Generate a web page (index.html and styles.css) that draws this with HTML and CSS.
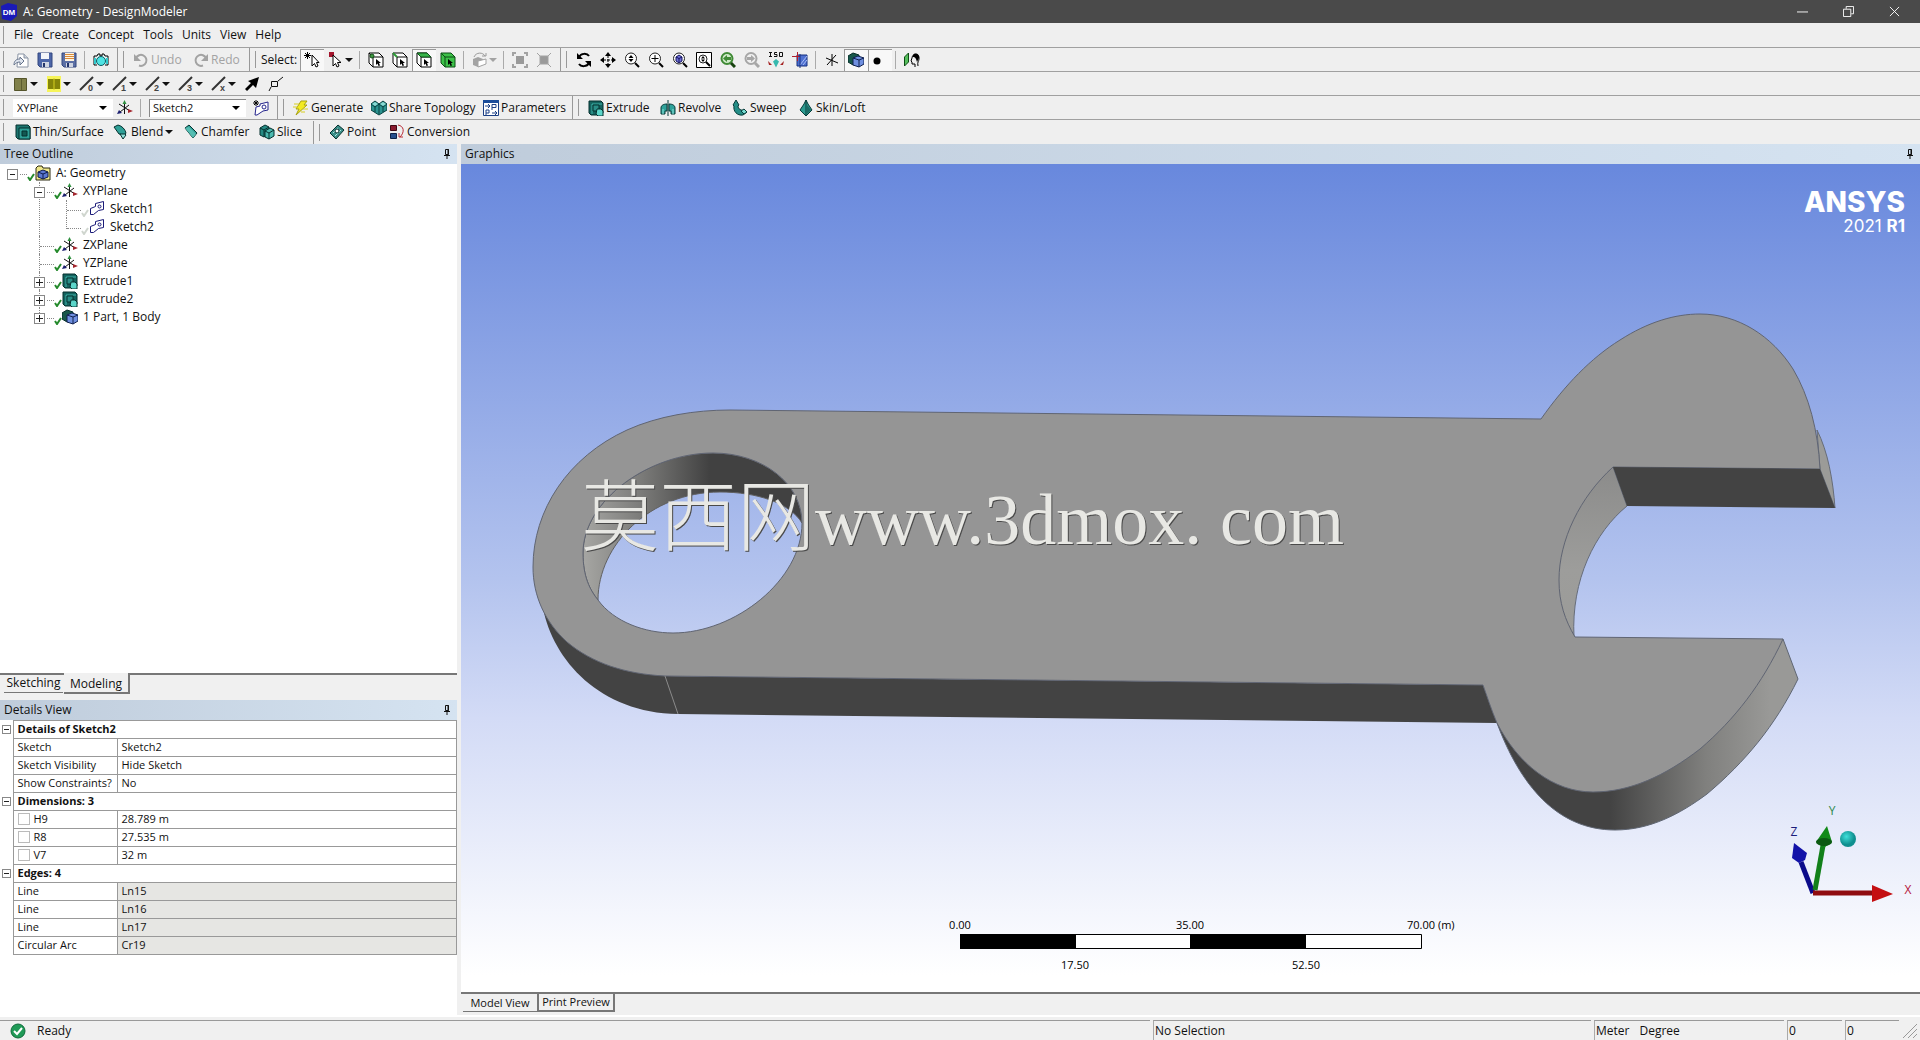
FILE: index.html
```html
<!DOCTYPE html>
<html lang="en">
<head>
<meta charset="utf-8">
<title>A: Geometry - DesignModeler</title>
<link rel="stylesheet" href="styles.css">
</head>
<body>
<svg class="defs" aria-hidden="true">
  <symbol id="i-new" viewBox="0 0 16 16"><path d="M5 2h6l4 4v9H4z" fill="#fff" stroke="#8a94a4"/><path d="M11 2v4h4" fill="#cdd3dc" stroke="#8a94a4"/><path d="M1 13c0-4 2-6 6-6V5l4 4-4 4v-3c-3 0-4 1-6 3z" fill="#dfe5ee" stroke="#66748c"/></symbol>
  <symbol id="i-save" viewBox="0 0 16 16"><path d="M1 1h14v14H3l-2-2z" fill="#4d66a8" stroke="#33477f"/><path d="M4 1h8v6H4z" fill="#f3f5f9"/><path d="M5 10h7v5H5z" fill="#cfd5e2"/><path d="M6 11h2v4H6z" fill="#24356b"/></symbol>
  <symbol id="i-saveas" viewBox="0 0 16 16"><path d="M1 1h14v14H3l-2-2z" fill="#5c70a5" stroke="#33477f"/><path d="M4 1h9v8H4z" fill="#fff4df"/><path d="M4 2.500h9M4 4.500h9M4 6.500h9" stroke="#d98a3a"/><path d="M5 11h7v4H5z" fill="#cfd5e2"/><path d="M6 11h2v4H6z" fill="#24356b"/></symbol>
  <symbol id="i-camera" viewBox="0 0 16 16"><path d="M1 4h3l1-2h2v2h2V2h2l1 2h3v9h-3M4 13H1V4" fill="#e8f6f6" stroke="#000"/><circle cx="8" cy="9" r="4.500" fill="#4fe3e3" stroke="#0c5a60"/><path d="M2 6v6M14 6v6" stroke="#34c8cc" stroke-width="2"/></symbol>
  <symbol id="i-undo" viewBox="0 0 16 16"><path d="M3 6a5.500 5.500 0 1 1 3 7.500" fill="none" stroke="#a3a3a3" stroke-width="2"/><path d="M1 2v7h7z" fill="#a3a3a3"/></symbol>
  <symbol id="i-redo" viewBox="0 0 16 16"><path d="M13 6a5.500 5.500 0 1 0-3 7.500" fill="none" stroke="#a3a3a3" stroke-width="2"/><path d="M15 2v7H8z" fill="#a3a3a3"/></symbol>
  <symbol id="i-newsel" viewBox="0 0 16 16"><path d="M3.500 0v7M0 3.500h7M1 1l5 5M6 1L1 6" stroke="#000"/><path d="M8 3v11l2.500-2.500L12 15l2-1-1.500-3.500H15z" fill="#fff" stroke="#000"/></symbol>
  <symbol id="i-selmode" viewBox="0 0 16 16"><path d="M1 0h5v5H1z" fill="#a3142c"/><path d="M5 3v11l2.500-2.500L9 15l2-1-1.500-3.500H13z" fill="#fff" stroke="#000"/></symbol>
  <symbol id="i-cube" viewBox="0 0 16 16"><path d="M1 1h10l4 4v10H5l-4-4z" fill="#fff" stroke="#000"/><path d="M1 1l4 4h10M5 5v10" fill="none" stroke="#000"/><path d="M8 7v6l1.500-1.500 1 2.500 1.500-.5-1-2.500h2z"/></symbol>
  <symbol id="i-vert" viewBox="0 0 16 16"><use href="#i-cube"/><circle cx="4" cy="4" r="2" fill="#3c9a3f" stroke="#124d17"/></symbol>
  <symbol id="i-edge" viewBox="0 0 16 16"><use href="#i-cube"/><path d="M1 1l4 4" stroke="#2c9a35" stroke-width="2"/></symbol>
  <symbol id="i-face" viewBox="0 0 16 16"><use href="#i-cube"/><path d="M1 1h10l4 4H5z" fill="#38b44a" stroke="#0c5418"/></symbol>
  <symbol id="i-body" viewBox="0 0 16 16"><path d="M1 1h10l4 4v10H5l-4-4z" fill="#3cc148" stroke="#0b4d14"/><path d="M1 1l4 4h10M5 5v10" fill="none" stroke="#0b4d14"/><path d="M8 7v6l1.500-1.500 1 2.500 1.500-.5-1-2.500h2z"/></symbol>
  <symbol id="i-extend" viewBox="0 0 16 16"><path d="M1 7l5-2 5 2v6l-5 2-5-2z" fill="#a3a3a3"/><path d="M6 9l8-2v5l-8 3z" fill="#fff" stroke="#a3a3a3"/><path d="M2 5c2-5 9-5 11-1M10 4h4V1" fill="none" stroke="#9a9a9a"/></symbol>
  <symbol id="i-grow" viewBox="0 0 16 16"><path d="M4 4h8v8H4z" fill="#9a9a9a"/><path d="M1 4V1h3M12 1h3v3M15 12v3h-3M4 15H1v-3" fill="none" stroke="#a3a3a3" stroke-width="2"/></symbol>
  <symbol id="i-shrink" viewBox="0 0 16 16"><path d="M4 4h8v8H4zM1 1l4 4M15 1l-4 4M1 15l4-4M15 15l-4-4" fill="#9a9a9a" stroke="#a3a3a3"/></symbol>
  <symbol id="i-rotate" viewBox="0 0 16 16"><path d="M3 5c2-4 8-4 10-1M13 11c-2 4-8 4-10 1" fill="none" stroke="#000" stroke-width="2"/><path d="M1 1v6h6zM15 15V9H9z"/></symbol>
  <symbol id="i-pan" viewBox="0 0 16 16"><path d="M8 3v10M3 8h10" stroke="#000" stroke-dasharray="3 1"/><path d="M8 0l3 4H5zM8 16l3-4H5zM0 8l4-3v6zM16 8l-4-3v6z"/></symbol>
  <symbol id="i-lens" viewBox="0 0 16 16"><circle cx="7" cy="6.500" r="5.500" fill="#fff" stroke="#222"/><path d="M11 11l4 4" stroke="#000" stroke-width="2"/></symbol>
  <symbol id="i-zoom" viewBox="0 0 16 16"><use href="#i-lens"/><path d="M7 3l2.500 3h-5zM7 10l2.500-3h-5z"/></symbol>
  <symbol id="i-zoomin" viewBox="0 0 16 16"><use href="#i-lens"/><path d="M7 3v7M3.500 6.500h7" stroke="#000"/></symbol>
  <symbol id="i-zoomfit" viewBox="0 0 16 16"><use href="#i-lens"/><path d="M4 5l3-2 3 2v4l-3 2-3-2z" fill="#6f6fd8" stroke="#14145e"/><path d="M4 5l3 1.500L10 5M7 6.500V11" fill="none" stroke="#14145e"/></symbol>
  <symbol id="i-zoombox" viewBox="0 0 16 16"><path d="M.5.5h15v15H.5z" fill="#fff" stroke="#000"/><circle cx="7" cy="7" r="4" fill="none" stroke="#222"/><path d="M10 10l4 4" stroke="#000" stroke-width="2"/><path d="M7 4l2 2.500H5zM7 10l2-2.500H5z"/></symbol>
  <symbol id="i-prev" viewBox="0 0 16 16"><circle cx="7" cy="6.500" r="5.500" fill="#cfeac8" stroke="#3f8a35" stroke-width="2"/><path d="M11 11l4 4" stroke="#17420f" stroke-width="3"/><path d="M3 6.500l4-3.500v2h4v3H7v2z" fill="#3f8a35"/></symbol>
  <symbol id="i-next" viewBox="0 0 16 16"><circle cx="7" cy="6.500" r="5.500" fill="#efefef" stroke="#a6a6a6" stroke-width="2"/><path d="M11 11l4 4" stroke="#a6a6a6" stroke-width="3"/><path d="M11 6.500L7 3v2H3v3h4v2z" fill="#a6a6a6"/></symbol>
  <symbol id="i-iso" viewBox="0 0 16 16"><path d="M1 .5h3M2.500 0v5M1 4.500h3M9 .5H6.500v2H9v2H6M11.500.5h3v4h-3z" fill="none" stroke="#111"/><path d="M8 7l3 2.500-3 6-3-6z" fill="#37b9ae"/><path d="M0 9l4 4H1z" fill="#a52222"/><path d="M16 9l-4 4h3z" fill="#a52222"/></symbol>
  <symbol id="i-look" viewBox="0 0 16 16"><path d="M5 3h10v11H5z" fill="#4d6fd0" stroke="#17307e"/><path d="M8 13l7-9M11 13l4-5" stroke="#a9bdf5"/><path d="M5.500 0v9M0 4.500h8" stroke="#b01f2d"/><path d="M8 2v14" stroke="#17307e"/></symbol>
  <symbol id="i-axes" viewBox="0 0 16 16"><path d="M8 2v12M2 6l12 5M3 13L12 3" stroke="#000"/></symbol>
  <symbol id="i-model" viewBox="0 0 16 16"><path d="M0 4l5-3 6 2v7l-6 3-5-3z" fill="#17574a" stroke="#062d28"/><path d="M5 6l5-2 6 2v6l-5 3-6-2z" fill="#6f8fe0" stroke="#10204f"/><path d="M5 6l6 2 5-2M11 8v7" fill="none" stroke="#10204f"/></symbol>
  <symbol id="i-dot" viewBox="0 0 16 16"><circle cx="5" cy="9" r="3.500"/></symbol>
  <symbol id="i-lookat" viewBox="0 0 16 16"><path d="M.5 5l4-4v9l-4 4z" fill="#55bf5c" stroke="#0c4d14"/><path d="M8 6c0-5 8-5 7 1 0 2-2 3-1 7M8 6l-1 3 1 1v2h3v3" fill="none" stroke="#000"/><path d="M9 3c2-3 7-1 6 3l-2 4c-1-4-2-5-4-5z"/></symbol>
  <symbol id="i-facecol" viewBox="0 0 16 16"><path d="M1.500 2.500h12v12h-12z" fill="#80804a" stroke="#55552b"/><path d="M8.500 2v12" stroke="#5c5c30"/></symbol>
  <symbol id="i-edgecol" viewBox="0 0 16 16"><path d="M1 0h14v16H1z" fill="#f6f45a"/><path d="M2 3h12v10H2z" fill="#85850a"/><path d="M8 2v12" stroke="#d6d020"/></symbol>
  <symbol id="i-pen" viewBox="0 0 16 16"><path d="M1 14L14 1" stroke="#333" stroke-width="2"/></symbol>
  <symbol id="i-arrowne" viewBox="0 0 16 16"><path d="M15 1l-3 11-3-3-6 6-2-2 6-6-3-2z"/></symbol>
  <symbol id="i-node" viewBox="0 0 16 16"><path d="M3.500 5.500h6v5h-6zM10 5l5-4M3 11l-2 4" fill="none" stroke="#111"/></symbol>
  <symbol id="i-plane" viewBox="0 0 16 16"><path d="M7.500 2v12M2 4l11 7M3 12l9-7" stroke="#111"/><path d="M7.500 0l2 4h-4z" fill="#2f8f3e"/><path d="M16 11l-5 2V9z" fill="#a3262e"/><path d="M0 14l5-1-3-3z" fill="#1b1f70"/></symbol>
  <symbol id="i-sketch" viewBox="0 0 16 16"><path d="M1.500 7.500l5-2v-3l8-2v8l-5 1-5 4h-3z" fill="#fff" stroke="#1a1a78"/><circle cx="10.500" cy="5.500" r="1.500" fill="none" stroke="#1a1a78"/></symbol>
  <symbol id="i-newsketch" viewBox="0 0 16 16"><path d="M3 7l4-1V4l8-2v8l-5 1-6 4H2z" fill="#fff" stroke="#24248c"/><circle cx="11" cy="7" r="2" fill="none" stroke="#24248c"/><path d="M3 0v6M0 3h6M1 1l4 4M5 1L1 5" stroke="#000"/></symbol>
  <symbol id="i-bolt" viewBox="0 0 16 16"><path d="M8 1h6l-3 4h3L3 15l3-6H3z" fill="#f3ea20" stroke="#a9a312"/><path d="M1 4h5M0 7h5M10 9h5M8 12h4" stroke="#d9cf20"/></symbol>
  <symbol id="i-share" viewBox="0 0 16 16"><path d="M0 4l4-3 4 3 4-3 4 3v6l-8 5-8-5z" fill="#2c9390" stroke="#07403f"/><path d="M0 4l4 3 4-3 4 3 4-3M4 7v5M12 7v5M8 4v10" fill="none" stroke="#07403f"/><path d="M4 2l3 2-3 2-3-2zM12 2l3 2-3 2-3-2z" fill="#8ad9d3"/></symbol>
  <symbol id="i-param" viewBox="0 0 16 16"><path d="M.5.5h15v15H.5z" fill="#fff" stroke="#1b3f85"/><path d="M0 0h16v3H0z" fill="#1b4c9a"/><path d="M2 6h4M5 4l2 2-2 2M9 10V4.500h4v3H9M3 15v-5h3v3H3M9 13h5M12 11l2 2-2 2" fill="none" stroke="#1b3f85"/></symbol>
  <symbol id="i-extrude" viewBox="0 0 16 16"><path d="M1 1h12l2 2v10l-2 2H3l-2-2z" fill="#14635f" stroke="#05302e"/><path d="M4 4h10M4 4v10" fill="none" stroke="#3fb5ab"/><path d="M5 5h6v6H5z" fill="#2a8f88" stroke="#05302e"/><path d="M9 9h4l2 2v5h-5l-2-2z" fill="#5cd6ca" stroke="#05302e"/></symbol>
  <symbol id="i-revolve" viewBox="0 0 16 16"><path d="M1 8c0-3 3-4 6-4v7H5v3H1zM9 4c3 0 6 1 6 4v6h-4v-3H9z" fill="#2fa29a" stroke="#063b39"/><path d="M8 0v16" stroke="#063b39"/><path d="M3 9v5M13 9v5" stroke="#8fe3db"/></symbol>
  <symbol id="i-sweep" viewBox="0 0 16 16"><path d="M1 5l3-5 3 5-1 1c0 3 3 5 7 4l2 2-4 3C5 16 1 11 2 6z" fill="#248d86" stroke="#063b39"/><path d="M12 9l3 3-3 2-3-3z" fill="#75dbd0" stroke="#063b39"/></symbol>
  <symbol id="i-skin" viewBox="0 0 16 16"><path d="M8 0l2 4 4 6-6 6-6-6 4-6z" fill="#2c9a90" stroke="#063b39"/><path d="M8 0v16" stroke="#063b39"/><path d="M9 5l4 5-4 4z" fill="#1b6c66"/></symbol>
  <symbol id="i-thin" viewBox="0 0 16 16"><path d="M1 1h12l2 2v12H3l-2-2z" fill="#1c756f" stroke="#05302e"/><path d="M4 4h11v11H4z" fill="#2fa097" stroke="#05302e"/><path d="M7 7h5v5H7z" fill="#135852" stroke="#05302e"/></symbol>
  <symbol id="i-blend" viewBox="0 0 16 16"><path d="M1 3l4-2c4 1 7 4 8 8l-3 4c-1-2-2-3-4-3z" fill="#2fa097" stroke="#05302e"/><path d="M7 10h5l1 1-3 4z" fill="#8fe3db" stroke="#05302e"/></symbol>
  <symbol id="i-chamfer" viewBox="0 0 16 16"><path d="M2 4l4-3 8 8-4 5z" fill="#2fa097" stroke="#05302e"/><path d="M2 4l4-1 7 7-3 4z" fill="#55bdb2"/></symbol>
  <symbol id="i-slice" viewBox="0 0 16 16"><path d="M1 4l5-3 4 2v7l-5 3-4-2z" fill="#268a83" stroke="#05302e"/><path d="M6 7l5-3 4 2v6l-5 3-4-2z" fill="#4cb9af" stroke="#05302e"/><path d="M1 4l4 2 5-3M6 7l4 2 5-3M10 9v6M5 6v7" fill="none" stroke="#05302e"/></symbol>
  <symbol id="i-point" viewBox="0 0 16 16"><path d="M1 9l8-8 6 5-8 9z" fill="#3a8f89" stroke="#05302e"/><path d="M4 9l5-5M6 12l6-6" stroke="#aee9e3"/><circle cx="8" cy="7" r="2" fill="#fff" stroke="#05302e"/></symbol>
  <symbol id="i-conv" viewBox="0 0 16 16"><path d="M1.500 1.500h6v5h-6z" fill="#8a1a2e" stroke="#3f0812"/><path d="M1.500 9.500h6v5h-6z" fill="#274f8c" stroke="#0e2347"/><path d="M9 1c6 1 7 7 2 12M10 9v4h4" fill="none" stroke="#b82a35"/></symbol>
  <symbol id="i-geom" viewBox="0 0 16 16"><path d="M1 3l2-2h4l1 2h7v12H1z" fill="#efe789" stroke="#2c2b12"/><path d="M3 7l5-2 5 2v5l-5 2-5-2z" fill="#5b77d1" stroke="#0f1c4d"/><path d="M3 7l5 2 5-2M8 9v5" fill="none" stroke="#0f1c4d"/></symbol>
  <symbol id="i-check" viewBox="0 0 8 8"><path d="M1 4l2 3 4-6" fill="none" stroke="currentColor" stroke-width="2"/></symbol>
  <symbol id="i-pin" viewBox="0 0 8 12"><path d="M2.500 1.500h3v5h-3zM1 7.500h6M4 8v3" fill="none" stroke="#111"/><path d="M5 1v6" stroke="#111"/></symbol>
</svg>

<div class="app">
  <header class="titlebar">
    <svg class="appicon" viewBox="0 0 18 18"><path d="M1 3l7-3 9 2v11l-6 5-9-2z" fill="#1a1ab8"/><text x="9" y="12" class="dm">DM</text></svg>
    <h1>A: Geometry - DesignModeler</h1>
    <div class="winbtns">
      <button aria-label="Minimize"><svg viewBox="0 0 12 12"><path d="M0 6.500h12" stroke="#fff"/></svg></button>
      <button aria-label="Restore"><svg viewBox="0 0 12 12"><path d="M.5 3.500h8v8h-8zM3.500 3V.5h8v8H9" fill="none" stroke="#fff"/></svg></button>
      <button aria-label="Close"><svg viewBox="0 0 12 12"><path d="M1 1l10 10M11 1L1 11" stroke="#fff"/></svg></button>
    </div>
  </header>

  <nav class="bar menu">
    <button>File</button><button>Create</button><button>Concept</button><button>Tools</button><button>Units</button><button>View</button><button>Help</button>
  </nav>

  <div class="bar">
    <button class="b" aria-label="New"><svg><use href="#i-new"/></svg></button>
    <button class="b" aria-label="Save"><svg><use href="#i-save"/></svg></button>
    <button class="b" aria-label="Save project"><svg><use href="#i-saveas"/></svg></button>
    <i class="sep"></i>
    <button class="b" aria-label="Capture"><svg><use href="#i-camera"/></svg></button>
    <i class="grip"></i>
    <button class="b w60" disabled><svg><use href="#i-undo"/></svg>Undo</button>
    <button class="b w56" disabled><svg><use href="#i-redo"/></svg>Redo</button>
    <i class="grip"></i>
    <span class="lbl">Select:</span>
    <button class="b on" aria-label="New selection"><svg><use href="#i-newsel"/></svg></button>
    <button class="b w32" aria-label="Select mode"><svg><use href="#i-selmode"/></svg><i class="caret"></i></button>
    <i class="sep"></i>
    <button class="b" aria-label="Points"><svg><use href="#i-vert"/></svg></button>
    <button class="b" aria-label="Edges"><svg><use href="#i-edge"/></svg></button>
    <button class="b on" aria-label="Faces"><svg><use href="#i-face"/></svg></button>
    <button class="b" aria-label="Bodies"><svg><use href="#i-body"/></svg></button>
    <i class="sep"></i>
    <button class="b w32" disabled aria-label="Extend"><svg><use href="#i-extend"/></svg><i class="caret"></i></button>
    <i class="sep"></i>
    <button class="b" disabled aria-label="Expand"><svg><use href="#i-grow"/></svg></button>
    <button class="b" disabled aria-label="Shrink"><svg><use href="#i-shrink"/></svg></button>
    <i class="grip"></i>
    <button class="b" aria-label="Rotate"><svg><use href="#i-rotate"/></svg></button>
    <button class="b" aria-label="Pan"><svg><use href="#i-pan"/></svg></button>
    <button class="b" aria-label="Zoom"><svg><use href="#i-zoom"/></svg></button>
    <button class="b" aria-label="Box zoom"><svg><use href="#i-zoomin"/></svg></button>
    <button class="b" aria-label="Zoom to fit"><svg><use href="#i-zoomfit"/></svg></button>
    <button class="b" aria-label="Magnifier"><svg><use href="#i-zoombox"/></svg></button>
    <button class="b" aria-label="Previous view"><svg><use href="#i-prev"/></svg></button>
    <button class="b" disabled aria-label="Next view"><svg><use href="#i-next"/></svg></button>
    <button class="b" aria-label="Isometric"><svg><use href="#i-iso"/></svg></button>
    <button class="b" aria-label="Look at plane"><svg><use href="#i-look"/></svg></button>
    <i class="sep"></i>
    <button class="b" aria-label="Display plane"><svg><use href="#i-axes"/></svg></button>
    <button class="b on" aria-label="Display model"><svg><use href="#i-model"/></svg></button>
    <button class="b on" aria-label="Display points"><svg><use href="#i-dot"/></svg></button>
    <i class="sep"></i>
    <button class="b" aria-label="Look at"><svg><use href="#i-lookat"/></svg></button>
  </div>

  <div class="bar">
    <button class="b w33" aria-label="Face color"><svg><use href="#i-facecol"/></svg><i class="caret"></i></button>
    <button class="b w33" aria-label="Edge color"><svg><use href="#i-edgecol"/></svg><i class="caret"></i></button>
    <button class="b w33"><svg viewBox="0 0 16 16"><use href="#i-pen"/><text x="9" y="15" class="n">0</text></svg><i class="caret"></i></button>
    <button class="b w33"><svg viewBox="0 0 16 16"><use href="#i-pen"/><text x="9" y="15" class="n">1</text></svg><i class="caret"></i></button>
    <button class="b w33"><svg viewBox="0 0 16 16"><use href="#i-pen"/><text x="9" y="15" class="n">2</text></svg><i class="caret"></i></button>
    <button class="b w33"><svg viewBox="0 0 16 16"><use href="#i-pen"/><text x="9" y="15" class="n">3</text></svg><i class="caret"></i></button>
    <button class="b w33"><svg viewBox="0 0 16 16"><use href="#i-pen"/><text x="9" y="15" class="n">x</text></svg><i class="caret"></i></button>
    <button class="b" aria-label="Edge direction"><svg><use href="#i-arrowne"/></svg></button>
    <button class="b" aria-label="Vertices"><svg><use href="#i-node"/></svg></button>
  </div>

  <div class="bar">
    <select class="plane" aria-label="Plane"><option>XYPlane</option></select>
    <button class="b" aria-label="New plane"><svg><use href="#i-plane"/></svg></button>
    <i class="sep"></i>
    <select class="sketch" aria-label="Sketch"><option>Sketch2</option></select>
    <button class="b" aria-label="New sketch"><svg><use href="#i-newsketch"/></svg></button>
    <i class="grip"></i>
    <button class="b w78"><svg><use href="#i-bolt"/></svg>Generate</button>
    <button class="b w112"><svg><use href="#i-share"/></svg>Share Topology</button>
    <button class="b w89"><svg><use href="#i-param"/></svg>Parameters</button>
    <i class="grip"></i>
    <button class="b w72"><svg><use href="#i-extrude"/></svg>Extrude</button>
    <button class="b w72"><svg><use href="#i-revolve"/></svg>Revolve</button>
    <button class="b w66"><svg><use href="#i-sweep"/></svg>Sweep</button>
    <button class="b w78"><svg><use href="#i-skin"/></svg>Skin/Loft</button>
  </div>

  <div class="bar last">
    <button class="b w98"><svg><use href="#i-thin"/></svg>Thin/Surface</button>
    <button class="b w70"><svg><use href="#i-blend"/></svg>Blend<i class="caret far"></i></button>
    <button class="b w76"><svg><use href="#i-chamfer"/></svg>Chamfer</button>
    <button class="b w54"><svg><use href="#i-slice"/></svg>Slice</button>
    <i class="grip"></i>
    <button class="b w60"><svg><use href="#i-point"/></svg>Point</button>
    <button class="b w89"><svg><use href="#i-conv"/></svg>Conversion</button>
  </div>

  <main class="work">
    <aside class="side">
      <h2 class="head">Tree Outline<svg class="pin"><use href="#i-pin"/></svg></h2>
      <div class="tree">
        <ul>
          <li><div class="node"><span class="lead"><button class="box" aria-label="Collapse"></button></span><svg class="ck"><use href="#i-check"/></svg><svg class="ic"><use href="#i-geom"/></svg><span>A: Geometry</span></div>
            <ul>
              <li><div class="node"><span class="lead"><button class="box" aria-label="Collapse"></button></span><svg class="ck"><use href="#i-check"/></svg><svg class="ic"><use href="#i-plane"/></svg><span>XYPlane</span></div>
                <ul>
                  <li><div class="node"><span class="lead"></span><svg class="ck dim"><use href="#i-check"/></svg><svg class="ic"><use href="#i-sketch"/></svg><span>Sketch1</span></div></li>
                  <li><div class="node"><span class="lead"></span><svg class="ck dim"><use href="#i-check"/></svg><svg class="ic"><use href="#i-sketch"/></svg><span>Sketch2</span></div></li>
                </ul>
              </li>
              <li><div class="node"><span class="lead"></span><svg class="ck"><use href="#i-check"/></svg><svg class="ic"><use href="#i-plane"/></svg><span>ZXPlane</span></div></li>
              <li><div class="node"><span class="lead"></span><svg class="ck"><use href="#i-check"/></svg><svg class="ic"><use href="#i-plane"/></svg><span>YZPlane</span></div></li>
              <li><div class="node"><span class="lead"><button class="box plus" aria-label="Expand"></button></span><svg class="ck"><use href="#i-check"/></svg><svg class="ic"><use href="#i-extrude"/></svg><span>Extrude1</span></div></li>
              <li><div class="node"><span class="lead"><button class="box plus" aria-label="Expand"></button></span><svg class="ck"><use href="#i-check"/></svg><svg class="ic"><use href="#i-extrude"/></svg><span>Extrude2</span></div></li>
              <li><div class="node"><span class="lead"><button class="box plus" aria-label="Expand"></button></span><svg class="ck"><use href="#i-check"/></svg><svg class="ic"><use href="#i-model"/></svg><span>1 Part, 1 Body</span></div></li>
            </ul>
          </li>
        </ul>
      </div>
      <div class="tabs modes"><button>Sketching</button><button class="active">Modeling</button></div>
      <h2 class="head">Details View<svg class="pin"><use href="#i-pin"/></svg></h2>
      <div class="details">
        <table>
          <colgroup><col class="c-tog"><col class="c-name"><col></colgroup>
          <tbody>
          <tr class="grp"><td><button class="box" aria-label="Collapse"></button></td><th colspan="2">Details of Sketch2</th></tr>
          <tr><td></td><th>Sketch</th><td>Sketch2</td></tr>
          <tr><td></td><th>Sketch Visibility</th><td>Hide Sketch</td></tr>
          <tr><td></td><th>Show Constraints?</th><td>No</td></tr>
          <tr class="grp"><td><button class="box" aria-label="Collapse"></button></td><th colspan="2">Dimensions: 3</th></tr>
          <tr><td></td><th><label><input type="checkbox">H9</label></th><td>28.789 m</td></tr>
          <tr><td></td><th><label><input type="checkbox">R8</label></th><td>27.535 m</td></tr>
          <tr><td></td><th><label><input type="checkbox">V7</label></th><td>32 m</td></tr>
          <tr class="grp"><td><button class="box" aria-label="Collapse"></button></td><th colspan="2">Edges: 4</th></tr>
          <tr class="ro"><td></td><th>Line</th><td>Ln15</td></tr>
          <tr class="ro"><td></td><th>Line</th><td>Ln16</td></tr>
          <tr class="ro"><td></td><th>Line</th><td>Ln17</td></tr>
          <tr class="ro"><td></td><th>Circular Arc</th><td>Cr19</td></tr>
          </tbody>
        </table>
      </div>
    </aside>

    <section class="gfx">
      <h2 class="head">Graphics<svg class="pin"><use href="#i-pin"/></svg></h2>
      <div class="canvas">
        <svg class="part" viewBox="461 164 1459 828">
          <defs>
            <linearGradient id="g1" gradientUnits="userSpaceOnUse" x1="583" y1="0" x2="710" y2="0"><stop offset="0" stop-color="#a6a6a3"/><stop offset=".45" stop-color="#7c7c7a"/><stop offset="1" stop-color="#414141"/></linearGradient>
            <linearGradient id="g2" gradientUnits="userSpaceOnUse" x1="1610" y1="0" x2="1770" y2="0"><stop offset="0" stop-color="#434343"/><stop offset=".6" stop-color="#80807e"/><stop offset="1" stop-color="#999997"/></linearGradient>
            <linearGradient id="g3" gradientUnits="userSpaceOnUse" x1="0" y1="470" x2="0" y2="637"><stop offset="0" stop-color="#8c8c8b"/><stop offset=".6" stop-color="#9d9d9b"/><stop offset="1" stop-color="#9b9b98"/></linearGradient>
          </defs>
          <path fill="#434343" d="M543 608C553 660 600 713 678 714L1497 723L1483 685L665 676z"/>
          <path fill="url(#g2)" d="M1783 639L1798 679C1775 726 1745 762 1707 794C1680 814 1650 830 1615 830C1557 830 1520 785 1497 723L1593 780z" stroke="#5f6673"/>
          <path fill="url(#g1)" d="M598 600C598 545 650 492 720 492C757 492 790 503 802 523C802 483 762 453 713 453C650 453 583 500 583 553C583 577 590 590 598 600z" stroke="#606060"/>
          <path fill="url(#g3)" d="M1613 467L1627 506C1595 532 1571 580 1574 637C1550 600 1530 530 1613 467z" stroke="#666c78"/>
          <path fill="#9b9b98" stroke="#666c78" d="M1817 430C1828 452 1833 480 1835 508L1820 469z"/>
          <path fill="#959595" fill-rule="evenodd" stroke="#606573" d="M730 410L1541 419C1565 385 1591 358 1620 340C1648 322 1675 314 1700 314C1738 314 1772 336 1793 369C1809 396 1818 430 1820 469L1613 467C1580 497 1559 540 1559 580C1559 603 1565 620 1575 637L1783 639C1762 684 1735 719 1700 749C1665 776 1630 792 1593 792C1553 792 1518 764 1497 723C1491 709 1487 696 1483 685L665 676C625 674 592 663 567 642C545 622 533 596 533 567C533 510 568 457 627 430C658 416 695 410 730 410zM583 553C583 577 590 590 598 600C614 622 645 633 673 633C735 633 802 580 802 523C802 483 762 453 713 453C650 453 583 500 583 553z"/>
          <path fill="#434343" d="M1613 467L1820 469L1835 508L1627 506z"/>
          <path d="M665 676L678 714" stroke="#8b8b8b"/>
          <g class="mark"><text x="581" y="545" class="cjk">莫西网</text><text x="815" y="544" class="lat">www.3dmox.</text><text x="1220" y="544" class="lat">com</text></g>
        </svg>
        <div class="brand"><strong>ANSYS</strong><span>2021 <b>R1</b></span></div>
        <svg class="scale" viewBox="0 0 542 60">
          <path d="M40.500 16.500h461v14h-461z" fill="#fff" stroke="#000"/><path d="M40 16h116v15H40zM270 16h116v15H270z"/>
          <text x="40" y="11">0.00</text><text x="270" y="11">35.00</text><text x="487" y="11" class="end">70.00 (m)</text>
          <text x="155" y="51">17.50</text><text x="386" y="51">52.50</text>
        </svg>
        <svg class="triad" viewBox="1784 800 136 110">
          <defs><radialGradient id="ball" cx=".4" cy=".35"><stop offset="0" stop-color="#3fe0da"/><stop offset="1" stop-color="#0f8f8f"/></radialGradient></defs>
          <path d="M1813 893L1801 862" stroke="#0b0b8a" stroke-width="5"/>
          <path d="M1794 843l13 10-2 7-6 3-7-5z" fill="#1212a8"/>
          <path d="M1813 893h60" stroke="#8f0c10" stroke-width="5"/>
          <path d="M1872 885l21 9-21 8z" fill="#c40f12"/>
          <path d="M1815 890l9-50" stroke="#12801a" stroke-width="5"/>
          <path d="M1827 826l5 16-7 5-9-5z" fill="#128a18"/><ellipse cx="1824" cy="842" rx="8" ry="4" fill="#0c5a12"/>
          <circle cx="1848" cy="839" r="8" fill="url(#ball)"/>
          <text x="1832" y="815" fill="#2e8a4e">Y</text><text x="1794" y="836" fill="#1c1c7c">Z</text><text x="1908" y="894" fill="#b5163c">X</text>
        </svg>
      </div>
      <div class="tabs views"><button class="active">Model View</button><button>Print Preview</button></div>
    </section>
  </main>

  <footer class="status">
    <div class="ready"><svg viewBox="0 0 16 16"><circle cx="8" cy="8" r="7" fill="#1f9a57" stroke="#0e6b3a"/><path d="M4 8l3 3 5-6" fill="none" stroke="#fff" stroke-width="2"/></svg>Ready</div>
    <div>No Selection</div>
    <div class="units"><span>Meter</span><span>Degree</span></div>
    <div>0</div>
    <div>0</div>
    <svg class="size" viewBox="0 0 16 18"><path d="M1 18L15 4M6 18l9-9M11 18l4-4" stroke="#999"/></svg>
  </footer>
</div>
</body>
</html>
```
FILE: styles.css
```css
* { box-sizing: border-box; }
body { margin: 0; background: #f0f0f0; color: #111; font: 12px/16px "Open Sans", "Noto Sans", sans-serif; }
button, select, input { font: inherit; color: inherit; margin: 0; padding: 0; border: 0; background: none; }
h1, h2 { margin: 0; font-size: 12px; font-weight: 400; }
.defs { position: absolute; width: 0; height: 0; }
.app { display: flex; flex-direction: column; min-height: 100vh; }

.titlebar { display: flex; align-items: center; height: 23px; padding: 0 10px 0 0; background: #4a4a4a; color: #fff; }
.titlebar h1 { flex: 1; margin-left: 5px; }
.appicon { width: 18px; height: 18px; }
.dm { font: 700 8px "Liberation Sans", sans-serif; fill: #fff; text-anchor: middle; }
.winbtns { display: flex; gap: 14px; }
.winbtns button { display: grid; place-items: center; width: 32px; height: 20px; }
.winbtns svg { width: 11px; height: 11px; }

.bar { position: relative; display: flex; align-items: center; height: 24px; padding-left: 9px; background: #efefef; border-bottom: 1px solid #a0a0a0; }
.bar::before { content: ""; position: absolute; left: 3px; top: 3px; bottom: 3px; border-left: 1px solid #999; }
.bar.last { border-bottom: 0; padding-left: 11px; }
.menu { height: 25px; gap: 9px; padding-left: 14px; }
.b { display: flex; flex: none; align-items: center; width: 24px; height: 22px; padding-left: 4px; gap: 2px; white-space: nowrap; }
.b svg { flex: none; width: 16px; height: 16px; }
.b:disabled { color: #a3a3a3; }
.b.on { background: #f8f8f8; box-shadow: inset 1px 1px #999; }
.w32 { width: 32px; }
.w33 { width: 33px; }
.w54 { width: 54px; }
.w56 { width: 56px; }
.w60 { width: 60px; }
.w66 { width: 66px; }
.w70 { width: 70px; }
.w72 { width: 72px; }
.w76 { width: 76px; }
.w78 { width: 78px; }
.w89 { width: 89px; }
.w98 { width: 98px; }
.w112 { width: 112px; }
.n { font: 700 9px "Liberation Sans", sans-serif; fill: #444; }
.lbl { flex: none; width: 39px; }
.caret { flex: none; border: 4px solid transparent; border-top-color: currentColor; border-bottom: 0; }
.w32 .caret, .w33 .caret { margin-left: -1px; }
.sep { flex: none; width: 8px; height: 18px; background: linear-gradient(#aaa, #aaa) 3px 0 / 1px 100% no-repeat; }
.grip { flex: none; width: 16px; height: 23px; background: linear-gradient(#999, #999) 4px 0 / 1px 100% no-repeat, linear-gradient(#999, #999) 10px 50% / 1px 17px no-repeat; }
.bar select { appearance: none; height: 18px; padding-left: 4px; font-size: 11px; background: url("data:image/svg+xml,%3Csvg xmlns='http://www.w3.org/2000/svg' width='8' height='4'%3E%3Cpath d='M0 0h8L4 4z'/%3E%3C/svg%3E") right 6px center no-repeat #fff; }
.plane { width: 100px; margin-left: 4px; }
.bar .sketch { width: 97px; margin: 0 3px 0 4px; box-shadow: inset 1px 1px #888; }

.work { flex: 1; display: grid; grid-template-columns: 457px 1fr; column-gap: 4px; min-height: 0; }
.side, .gfx { display: flex; flex-direction: column; min-width: 0; }
.head { display: flex; flex: none; align-items: center; justify-content: space-between; height: 20px; padding: 0 6px 0 4px; background: linear-gradient(90deg, #bfccdb, #d5e3f1); }
.pin { width: 8px; height: 12px; }
.tree { flex: 510 0 0; background: #fff; border-bottom: 2px solid #777; }
.tree ul { margin: 0; padding: 0 0 0 27px; list-style: none; }
.tree > ul { padding-left: 7px; }
.tree li { position: relative; }
.tree li li::before { content: ""; position: absolute; left: 5px; top: 0; bottom: 0; border-left: 1px dotted #888; }
.tree li li:last-child::before { bottom: auto; height: 11px; }
.node { display: flex; align-items: center; height: 18px; }
.lead { position: relative; display: flex; align-items: center; width: 20px; height: 11px; margin-top: 3px; }
.lead::after { content: ""; flex: 1; border-top: 1px dotted #888; margin-left: 2px; }
.lead:empty::after { margin-left: 6px; }
.box { position: relative; display: block; width: 11px; height: 11px; background: linear-gradient(#222, #222) center / 5px 1px no-repeat, #fff; border: 1px solid #888; }
.box.plus { background: linear-gradient(#222, #222) center / 7px 1px no-repeat, linear-gradient(#222, #222) center / 1px 7px no-repeat, #fff; }
.ck { width: 8px; height: 8px; margin-top: 8px; color: #258a2c; }
.ck.dim { color: #d0d6cf; }
.ic { width: 16px; height: 16px; margin-right: 5px; }

.tabs { display: flex; flex: none; align-items: flex-start; }
.modes { height: 25px; padding-left: 4px; }
.modes button { height: 18px; width: 59px; border-bottom: 1px solid #777; }
.modes .active { width: 66px; height: 21px; margin-top: -2px; border-right: 2px solid #777; border-bottom-width: 2px; background: #f0f0f0; padding-top: 3px; margin-left: 1px; }
.details { flex: 296 0 0; background: #fff; font-size: 11px; }
table { width: 100%; border-collapse: collapse; table-layout: fixed; line-height: 16px; }
.c-tog { width: 13px; }
.c-name { width: 104px; }
tr { height: 18px; }
th, td { padding: 0 0 0 4px; border: 1px solid #999; text-align: left; font-weight: 400; white-space: nowrap; }
td:first-child { padding: 0 0 0 2px; border-width: 0 1px 0 0; }
td:first-child .box { width: 9px; height: 9px; }
.grp th { font-weight: 700; }
.ro td:last-child { background: #e6e6e3; }
label { display: flex; align-items: center; gap: 4px; }
input[type=checkbox] { appearance: none; width: 12px; height: 12px; border: 1px solid #bbb; background: #fff; }

.canvas { position: relative; flex: 1; overflow: hidden; background: linear-gradient(#6888dd, #b3c3ee 50%, #d3dbf6 67%, #fff 98%); border-bottom: 2px solid #777; }
.part { position: absolute; inset: 0; width: 100%; height: 100%; }
.mark { fill: #e8e8e4; filter: drop-shadow(1px 1px 0 #4a4a4a); }
.cjk { font: 300 78px "Noto Sans CJK SC", sans-serif; }
.lat { font: 72px "Liberation Serif", serif; }
.brand { position: absolute; top: 23px; right: 15px; color: #fff; text-align: right; font: 17px/18px Inter, sans-serif; }
.brand strong { display: block; font: 800 28px/30px Inter, sans-serif; }
.scale { position: absolute; left: 50%; bottom: 14px; width: 542px; height: 60px; transform: translateX(-50%); font-size: 11px; }
.scale text { text-anchor: middle; }
.scale .end { text-anchor: start; }
.triad { position: absolute; right: 0; bottom: 82px; width: 136px; height: 110px; }
.triad text { font-size: 12px; text-anchor: middle; }
.views { height: 21px; padding-left: 2px; font-size: 11px; }
.views button { width: 78px; height: 18px; border: 2px solid #777; border-top: 0; }
.views .active { width: 74px; height: 20px; margin-top: -2px; padding-top: 3px; background: #f0f0f0; border-width: 0 0 1px; }

.status { display: grid; grid-template-columns: 1fr 438px 190px 55px 54px 18px; column-gap: 3px; height: 25px; padding-top: 3px; background: #f0f0f0; border-top: 2px solid #fff; }
.status div { display: flex; align-items: center; border-top: 1px solid #999; border-left: 1px solid #aaa; padding-left: 1px; }
.status .ready { border-left: 0; padding-left: 10px; gap: 11px; }
.status .ready svg { width: 16px; height: 16px; }
.status .units { gap: 10px; }
.size { width: 16px; height: 18px; }
```
